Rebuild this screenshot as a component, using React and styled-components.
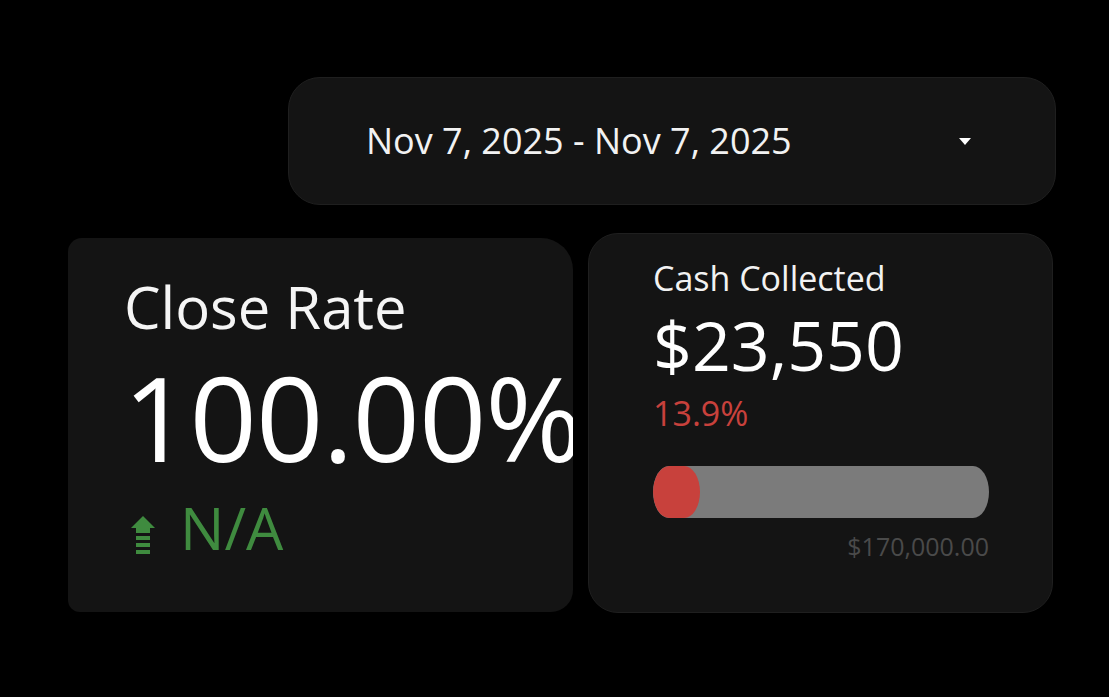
import React from 'react'
import styled, { createGlobalStyle } from 'styled-components'

const GlobalStyle = createGlobalStyle`
  html, body {
    margin: 0;
    padding: 0;
    background: #000;
  }
  body {
    font-family: "Open Sans", "Noto Sans", sans-serif;
    color: #fff;
  }
`

const UpArrow = () => (
  <svg width="26" height="40" viewBox="0 0 26 40">
    <path d="M13 1 L25 13 L1 13 Z" fill="currentColor" />
    <rect x="6" y="13" width="14" height="5" fill="currentColor" />
    <rect x="6" y="21" width="14" height="4" fill="currentColor" />
    <rect x="6" y="28" width="14" height="4" fill="currentColor" />
    <rect x="6" y="35" width="14" height="4" fill="currentColor" />
  </svg>
)

const App = () => {
  const collected = 23550
  const goal = 170000
  const pct = (collected / goal) * 100

  return (
    <Page>
      <GlobalStyle />
      <DateBar>
        <DateText>Nov 7, 2025 - Nov 7, 2025</DateText>
        <Caret />
      </DateBar>
      <Row>
        <RateCard>
          <RateLabel>Close Rate</RateLabel>
          <RateValue>100.00%</RateValue>
          <Trend>
            <UpArrow />
            <span>N/A</span>
          </Trend>
        </RateCard>
        <CashCard>
          <CashLabel>Cash Collected</CashLabel>
          <CashValue>$23,550</CashValue>
          <CashPct>13.9%</CashPct>
          <Track>
            <Fill style={{ width: `${pct}%` }} />
          </Track>
          <Goal>$170,000.00</Goal>
        </CashCard>
      </Row>
    </Page>
  )
}

const Page = styled.div`
  width: 1109px;
  height: 697px;
  box-sizing: border-box;
  padding: 77px 0 0 68px;
  display: flex;
  flex-direction: column;
  overflow: hidden;
`

const DateBar = styled.div`
  margin-left: 220px;
  width: 768px;
  height: 128px;
  box-sizing: border-box;
  background: #141414;
  border: 1px solid #1f1f1f;
  border-radius: 32px;
  display: flex;
  align-items: center;
  padding: 0 84px 0 77px;
  justify-content: space-between;
`

const DateText = styled.div`
  font-size: 36px;
  color: #f2f2f2;
  margin-top: -2px;
`

const Caret = styled.div`
  width: 0;
  height: 0;
  border-left: 6px solid transparent;
  border-right: 6px solid transparent;
  border-top: 7px solid #fff;
`

const Row = styled.div`
  display: flex;
  align-items: flex-start;
  gap: 15px;
  margin-top: 28px;
`

const RateCard = styled.div`
  margin-top: 5px;
  width: 505px;
  height: 374px;
  box-sizing: border-box;
  background: #141414;
  border-radius: 14px 32px 22px 12px;
  padding: 40px 0 0 56px;
  overflow: hidden;
  white-space: nowrap;
`

const RateLabel = styled.div`
  font-size: 58px;
  line-height: 1;
  color: #f5f5f5;
`

const RateValue = styled.div`
  font-size: 118px;
  line-height: 1;
  margin-top: 22px;
  margin-left: -1px;
  letter-spacing: -1px;
  color: #fff;
`

const Trend = styled.div`
  display: flex;
  align-items: flex-end;
  gap: 24px;
  margin-top: 22px;
  margin-left: 6px;
  color: #3f8b3f;
  font-size: 59px;
  line-height: 1;

  svg {
    margin-bottom: 2px;
  }
`

const CashCard = styled.div`
  width: 465px;
  height: 380px;
  box-sizing: border-box;
  background: #141414;
  border: 1px solid #1f1f1f;
  border-radius: 30px;
  padding: 27px 63px 0 64px;
  display: flex;
  flex-direction: column;
`

const CashLabel = styled.div`
  font-size: 34px;
  line-height: 1;
  color: #f2f2f2;
`

const CashValue = styled.div`
  font-size: 68px;
  line-height: 1;
  margin-top: 16px;
  color: #fff;
`

const CashPct = styled.div`
  font-size: 34px;
  line-height: 1;
  margin-top: 17px;
  color: #c8413c;
`

const Track = styled.div`
  margin-top: 36px;
  height: 52px;
  background: #7b7b7b;
  border-radius: 16px / 26px;
  overflow: hidden;
`

const Fill = styled.div`
  height: 100%;
  min-width: 47px;
  background: #c8413c;
  border-radius: 16px / 26px;
`

const Goal = styled.div`
  margin-top: 11px;
  align-self: flex-end;
  font-size: 25px;
  color: #4a4a4a;
`

export default App
